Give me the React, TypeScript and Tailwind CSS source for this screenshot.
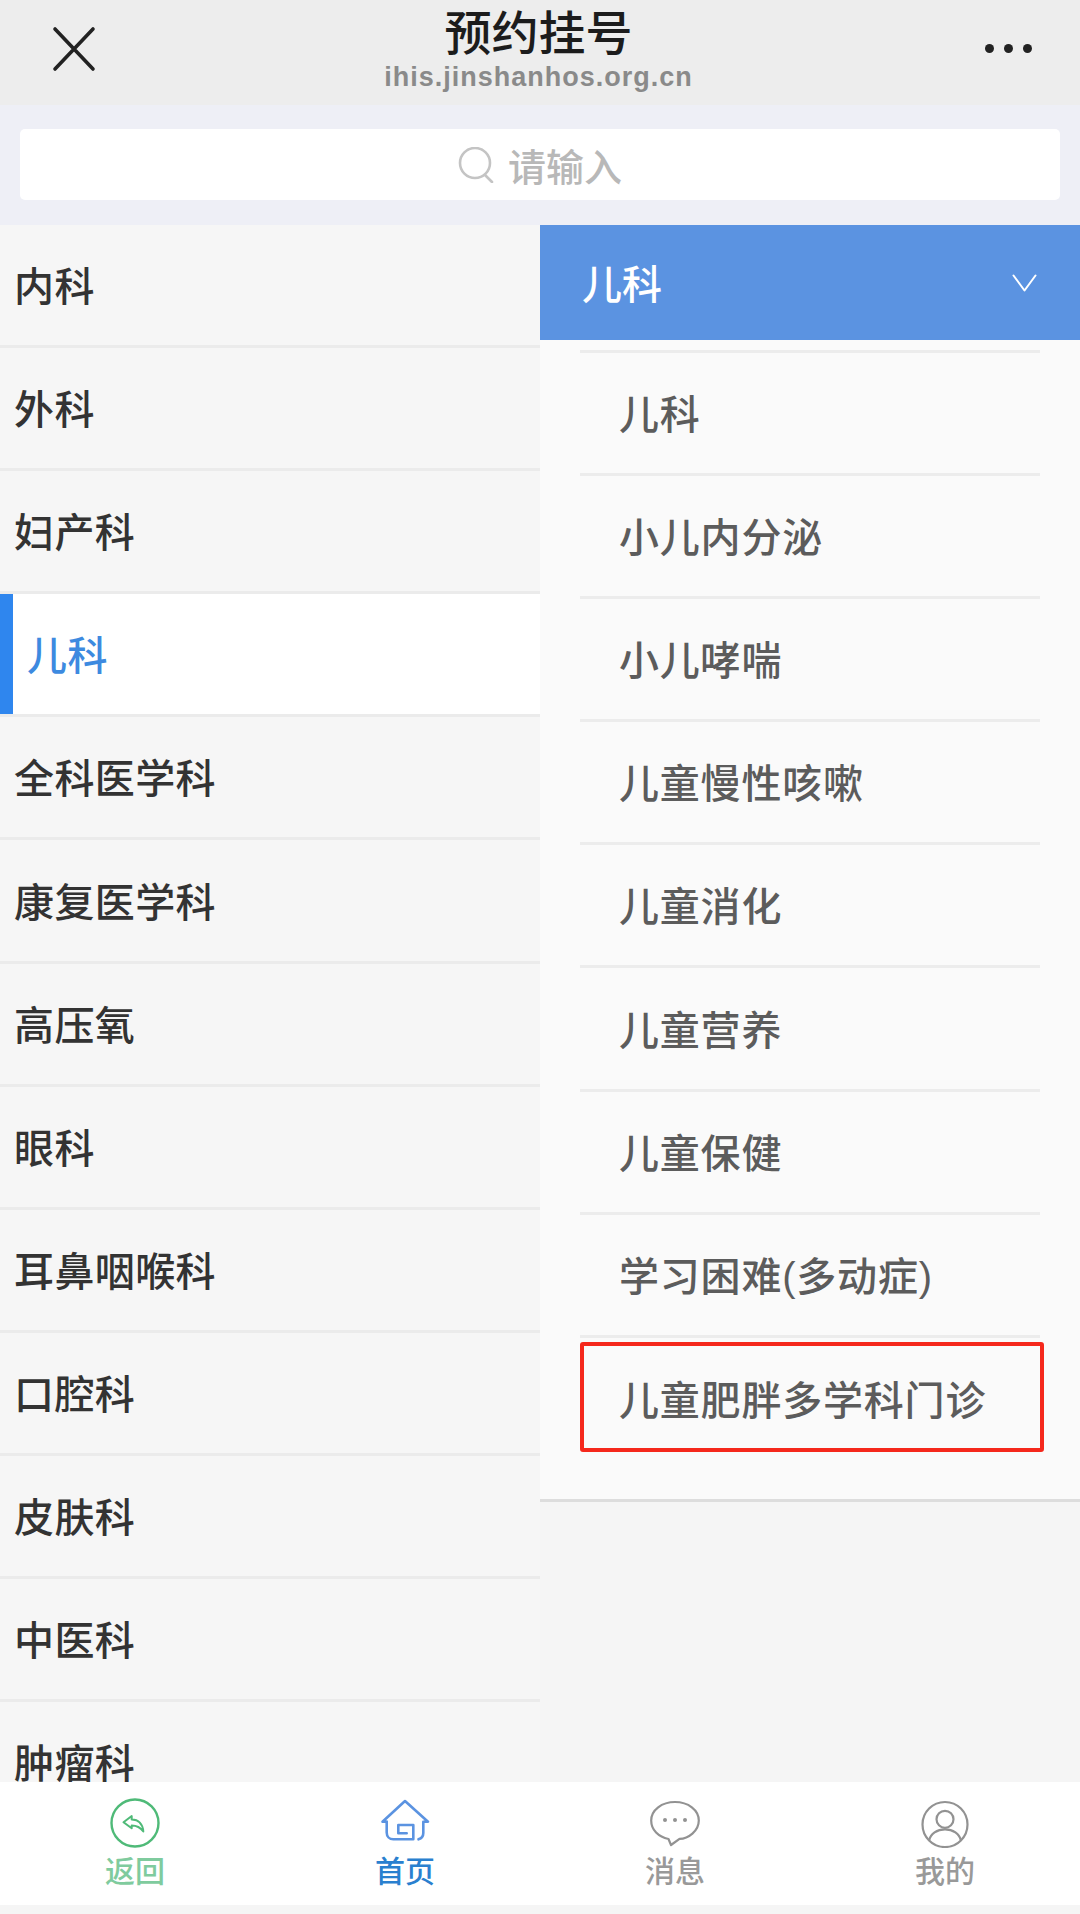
const departments = [
  "内科",
  "外科",
  "妇产科",
  "儿科",
  "全科医学科",
  "康复医学科",
  "高压氧",
  "眼科",
  "耳鼻咽喉科",
  "口腔科",
  "皮肤科",
  "中医科",
  "肿瘤科",
];

const clinics = [
  "儿科",
  "小儿内分泌",
  "小儿哮喘",
  "儿童慢性咳嗽",
  "儿童消化",
  "儿童营养",
  "儿童保健",
  "学习困难(多动症)",
  "儿童肥胖多学科门诊",
];

function ReturnIcon() {
  return (
    <svg width="50" height="50" viewBox="0 0 50 50" fill="none" stroke="#4fba78" strokeLinejoin="round" strokeLinecap="round">
      <circle cx="25" cy="25" r="23.5" strokeWidth="2.4" />
      <path d="M13.5 24.3L21.7 18V21.5C28.5 21.5 32.8 26 33.3 33.5C30.5 29.5 26.5 27.5 21.7 27.5V30.3Z" strokeWidth="2" />
    </svg>
  );
}

function HomeIcon() {
  return (
    <svg width="50" height="50" viewBox="0 0 50 50" fill="none" stroke="#5b93e1" strokeWidth="2.6" strokeLinejoin="round" strokeLinecap="round">
      <path d="M6.7 23.7H2.5L25 3L48 23.7H43.3V35C43.3 38 41 40.5 38.5 41.3" />
      <path d="M6.7 23.7V34.5C6.7 38.5 9.5 41.3 13.3 41.3H33.3V27H18.3V35.3H26.7" />
    </svg>
  );
}

function MessageIcon() {
  return (
    <svg width="50" height="50" viewBox="0 0 50 50" fill="none" stroke="#929292" strokeWidth="2.2" strokeLinejoin="round">
      <path d="M18.5 41C8.5 39 1.2 32 1.2 22.5C1.2 12 11.8 4 25 4C38.2 4 48.8 12 48.8 22.5C48.8 33 38.2 40.8 29.5 40.8L21 47Z" />
      <circle cx="15" cy="22" r="2" fill="#929292" stroke="none" />
      <circle cx="25" cy="22" r="2" fill="#929292" stroke="none" />
      <circle cx="35" cy="22" r="2" fill="#929292" stroke="none" />
    </svg>
  );
}

function MineIcon() {
  return (
    <svg width="50" height="50" viewBox="0 0 50 50" fill="none" stroke="#929292" strokeWidth="2.2">
      <circle cx="25" cy="26.5" r="22.5" />
      <circle cx="25" cy="21.3" r="8.5" />
      <path d="M9.3 42C10.5 36 17 31.3 25 31.3C33 31.3 39.5 36 40.7 42" />
    </svg>
  );
}

const tabs = [
  { label: "返回", icon: <ReturnIcon />, color: "text-[#7fcb9e]" },
  { label: "首页", icon: <HomeIcon />, color: "text-[#2a80cf]" },
  { label: "消息", icon: <MessageIcon />, color: "text-[#999999]" },
  { label: "我的", icon: <MineIcon />, color: "text-[#999999]" },
];

export default function App() {
  return (
    <div className="flex h-[1914px] w-[1080px] flex-col overflow-hidden bg-[#f5f5f5] font-['Liberation_Sans','Noto_Sans_CJK_SC',sans-serif]">
      <header className="grid h-[105px] shrink-0 grid-cols-[1fr_auto_1fr] items-start bg-[#ededed] pr-[3px]">
        <svg className="ml-[52px] mt-[26px]" width="44" height="46" viewBox="0 0 44 46" fill="none" stroke="#222222" strokeWidth="3.6" strokeLinecap="round">
          <path d="M3 3L41 43M41 3L3 43" />
        </svg>
        <div className="flex flex-col items-center pt-[7px]">
          <div className="text-[47px] font-medium leading-[54px] text-[#1c1c1c]">预约挂号</div>
          <div className="text-[27px] font-bold leading-[32px] tracking-[1px] text-[#8a8a8a]">ihis.jinshanhos.org.cn</div>
        </div>
        <div className="flex justify-end gap-[10px] pr-[45px] pt-[44px]">
          <span className="h-[9px] w-[9px] rounded-full bg-[#222222]" />
          <span className="h-[9px] w-[9px] rounded-full bg-[#222222]" />
          <span className="h-[9px] w-[9px] rounded-full bg-[#222222]" />
        </div>
      </header>

      <div className="h-[120px] shrink-0 bg-[#eeeff6] px-[20px] pt-[24px]">
        <div className="flex h-[71px] items-center justify-center gap-[14px] rounded-[5px] bg-white">
          <svg width="36" height="36" viewBox="0 0 36 36" fill="none" stroke="#c4c4c4" strokeWidth="2.6" strokeLinecap="round">
            <circle cx="17" cy="16" r="15" />
            <path d="M27 28L34 35" />
          </svg>
          <span className="pt-[6px] text-[38px] font-medium leading-none text-[#b8b8b8]">请输入</span>
        </div>
      </div>

      <main className="flex h-[1557px] shrink-0 overflow-hidden">
        <ul className="w-[540px] shrink-0">
          {departments.map((name) => {
            const active = name === "儿科";
            return (
              <li
                key={name}
                className={`flex h-[123.1px] items-stretch border-b-[3px] border-[#ebebeb] ${active ? "bg-white" : "bg-[#f6f6f6]"}`}
              >
                {active && <span className="w-[13px] bg-[#2f86ee]" />}
                <span
                  className={`flex items-center pl-[14px] pt-[4px] text-[40px] font-medium tracking-[0.4px] ${active ? "text-[#3d8ae0]" : "text-[#333333]"}`}
                >
                  {name}
                </span>
              </li>
            );
          })}
        </ul>

        <section className="w-[540px] shrink-0">
          <div className="flex h-[115px] items-center justify-between bg-[#5b93e1] pl-[42px] pr-[43px]">
            <span className="pt-[4px] text-[40px] font-medium leading-none text-white">儿科</span>
            <svg width="25" height="18" viewBox="0 0 25 18" fill="none" stroke="#ffffff" strokeWidth="2" strokeLinecap="round" strokeLinejoin="round">
              <path d="M1.5 1.5L12.5 16.5L23.5 1.5" />
            </svg>
          </div>
          <div className="border-b-[3px] border-[#dddddd] bg-[#fafafa] px-[40px] pb-[38px] pt-[10px]">
            <ul className="border-t-[3px] border-[#ececec]">
              {clinics.map((name, i) => {
                const last = i === clinics.length - 1;
                return (
                  <li
                    key={name}
                    className={`relative flex h-[123.1px] items-center pl-[39px] pt-[4px] text-[40px] font-medium tracking-[0.8px] text-[#5c5c5c] ${last ? "" : "border-b-[3px] border-[#ececec]"}`}
                  >
                    {name}
                    {last && (
                      <span className="absolute -right-[4px] left-0 top-[4px] h-[110px] rounded-[3px] border-[4px] border-[#f5281c]" />
                    )}
                  </li>
                );
              })}
            </ul>
          </div>
        </section>
      </main>

      <nav className="grid h-[123px] shrink-0 grid-cols-4 bg-white pt-[16px]">
        {tabs.map((tab) => (
          <div key={tab.label} className="flex flex-col items-center">
            {tab.icon}
            <span className={`mt-[6px] text-[30px] font-medium leading-[36px] ${tab.color}`}>{tab.label}</span>
          </div>
        ))}
      </nav>
    </div>
  );
}
